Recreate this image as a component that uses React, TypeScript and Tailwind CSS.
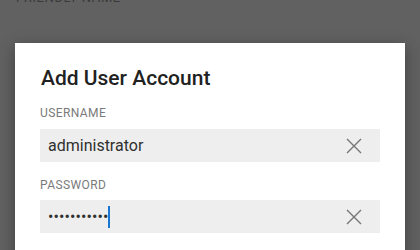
import React from "react";

function XIcon() {
  return (
    <svg width="16" height="16" viewBox="0 0 16 16" className="shrink-0">
      <path d="M1 1 L15 15 M15 1 L1 15" stroke="#757575" strokeWidth="1.4" fill="none" />
    </svg>
  );
}

export default function App() {
  return (
    <div
      className="w-[420px] h-[250px] bg-[#616161] overflow-hidden flex flex-col"
      style={{ fontFamily: "Roboto, 'Noto Sans', sans-serif" }}
    >
      <div className="mt-[-10px] ml-[16px] h-[15px] text-[13px] leading-[15px] tracking-[0.6px] text-[#3a3a3a]">
        FRIENDLY NAME
      </div>
      <div className="ml-[15px] mt-[38px] w-[390px] bg-white shadow-[0_4px_14px_rgba(0,0,0,0.35)] px-[25px] pt-[21px] flex flex-col shrink-0 h-[260px]">
        <div className="ml-[1px] text-[21px] leading-[28px] font-medium text-[#212121]">Add User Account</div>
        <div className="mt-[13px] text-[12px] leading-[16px] text-[#7a7a7a] tracking-[0.4px]">USERNAME</div>
        <div className="mt-[8px] h-[33px] bg-[#eeeeee] flex items-center pl-[8px] pr-[18px]">
          <span className="flex-1 text-[16px] text-[#303030]">administrator</span>
          <XIcon />
        </div>
        <div className="mt-[15px] text-[12px] leading-[16px] text-[#7a7a7a] tracking-[0.4px]">PASSWORD</div>
        <div className="mt-[7px] h-[33px] bg-[#eeeeee] flex items-center pl-[8px] pr-[18px]">
          <span className="flex-1 flex items-center text-[16px] text-[#303030]">
            <span className="tracking-[0.1px]">•••••••••••</span>
            <span className="w-[2px] h-[22px] bg-[#1976d2]" />
          </span>
          <XIcon />
        </div>
      </div>
    </div>
  );
}
